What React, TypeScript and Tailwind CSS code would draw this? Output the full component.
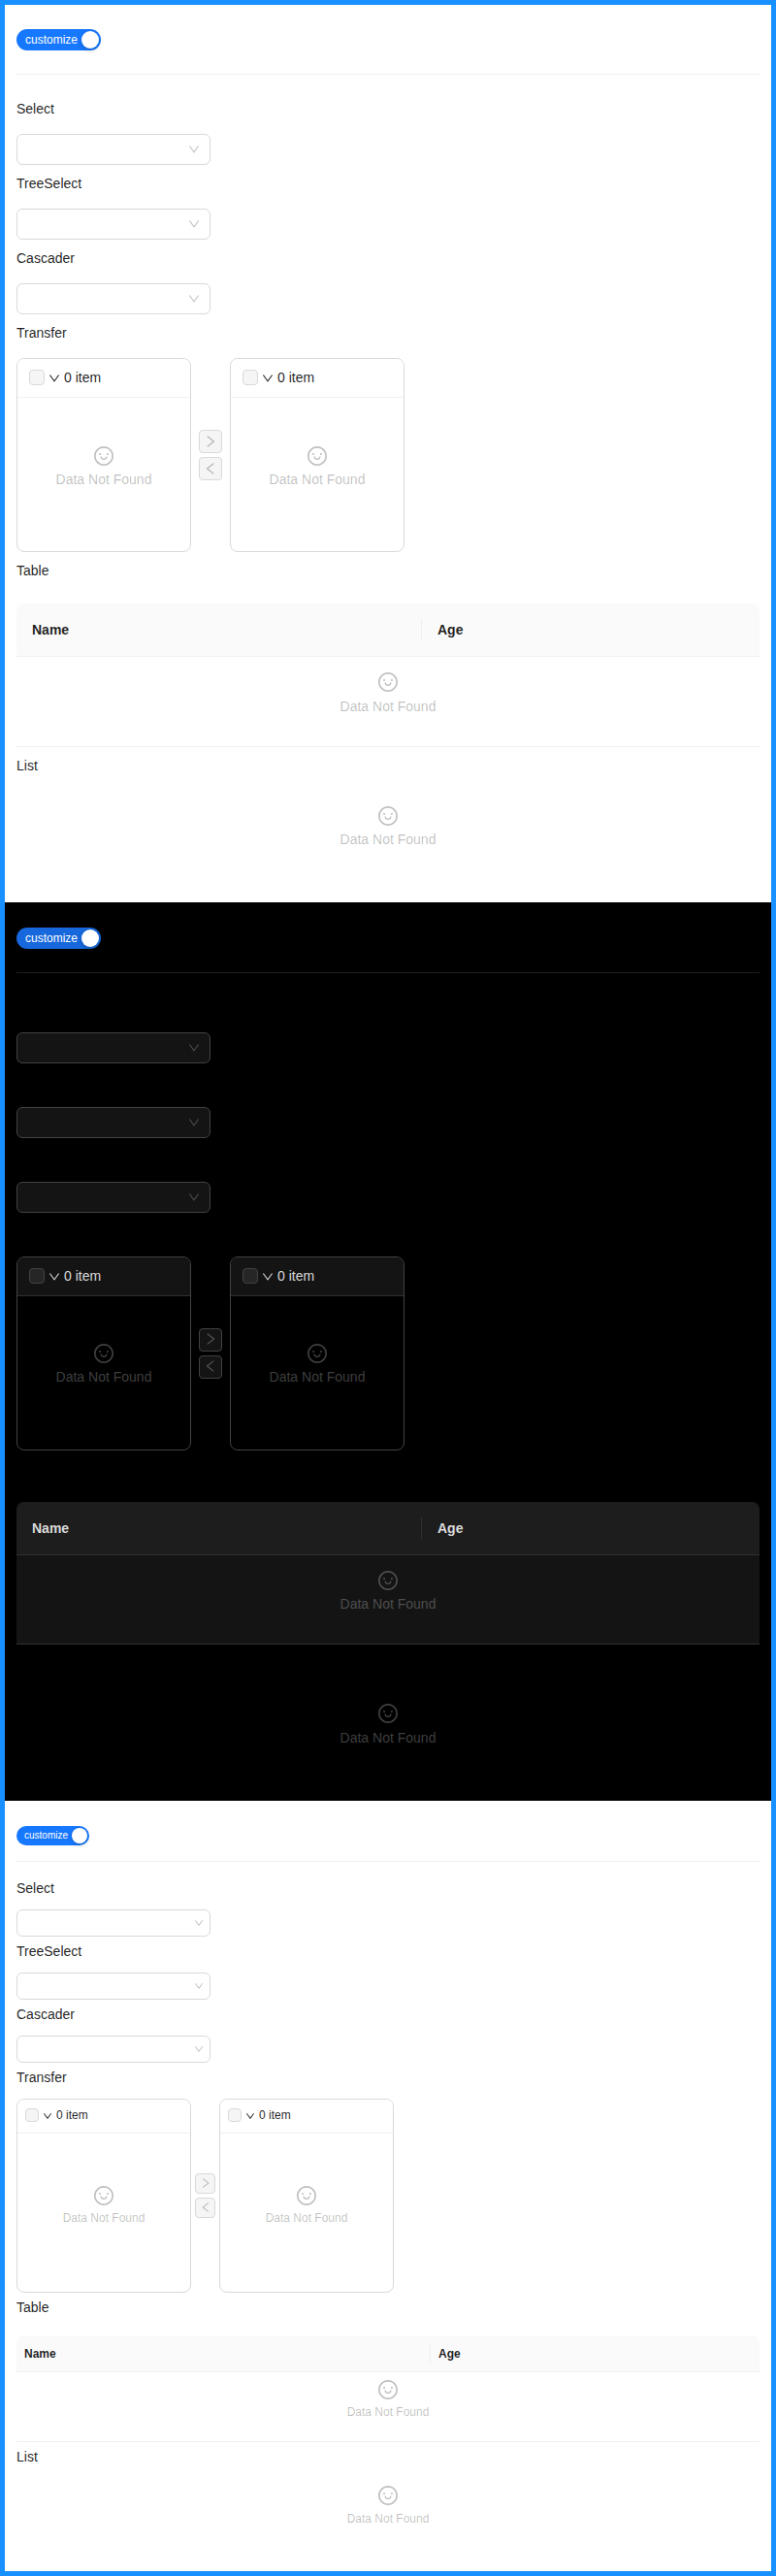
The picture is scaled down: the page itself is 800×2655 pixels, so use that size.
import React from 'react';

type Theme = {
  id: string;
  section: string;
  toggle: string;
  toggleText: string;
  handle: string;
  divider: string;
  label: string;
  group: string;
  select: string;
  arrow: string;
  transfer: string;
  panel: string;
  panelHead: string;
  checkbox: string;
  caret: string;
  headText: string;
  panelBody: string;
  operations: string;
  opButton: string;
  opIcon: string;
  emptyText: string;
  panelGap: string;
  table: string;
  thead: string;
  nameCell: string;
  separator: string;
  ageCell: string;
  row: string;
  rowGap: string;
  list: string;
  listGap: string;
};

const light: Theme = {
  id: 'light',
  section: 'h-[925px] bg-white pt-[25px]',
  toggle: 'h-[22px] w-[87px] bg-[#1677ff] pl-[9px] pr-[2px]',
  toggleText: 'text-[12px] leading-[22px]',
  handle: 'size-[18px]',
  divider: 'mt-6 mb-6 bg-[rgba(5,5,5,0.06)]',
  label: 'mb-[15px] text-[rgba(0,0,0,0.88)]',
  group: 'mb-2',
  select: 'h-8 border-[#d9d9d9] bg-white pr-[10px]',
  arrow: 'size-3 text-[rgba(0,0,0,0.25)]',
  transfer: 'mb-2',
  panel: 'border-[#d9d9d9]',
  panelHead: 'h-10 border-[#f0f0f0] bg-white pl-3 pb-px',
  checkbox: 'size-4 border-[#d9d9d9] bg-[#f5f5f5]',
  caret: 'mt-[2px] size-3 text-[rgba(0,0,0,0.88)]',
  headText: 'text-[14px] leading-[22px] text-[rgba(0,0,0,0.88)]',
  panelBody: 'pt-[50px]',
  operations: 'mx-2',
  opButton: 'size-6 border-[#d9d9d9] bg-[#f5f5f5] pl-1 pt-1',
  opIcon: 'size-[14px] text-[rgba(0,0,0,0.25)]',
  emptyText: 'text-[14px] leading-[22px] text-[rgba(0,0,0,0.25)]',
  panelGap: 'mt-[3px]',
  table: 'mt-[23px] mb-2 bg-white',
  thead: 'h-[55px] border-[#f0f0f0] bg-[#fafafa] text-[14px] leading-[22px] text-[rgba(0,0,0,0.88)]',
  nameCell: 'w-[417px] pl-4',
  separator: 'h-[22px] bg-[#f0f0f0]',
  ageCell: 'pl-4',
  row: 'h-[93px] border-[#f0f0f0] pt-4',
  rowGap: 'mt-1',
  list: 'pt-4',
  listGap: 'mt-[3px]',
};

const dark: Theme = {
  ...light,
  id: 'dark',
  section: 'h-[926px] bg-black pt-[26px]',
  toggle: 'h-[22px] w-[87px] bg-[#1668dc] pl-[9px] pr-[2px]',
  divider: 'mt-6 mb-6 bg-[rgba(253,253,253,0.12)]',
  label: 'mb-[15px] text-black',
  select: 'h-8 border-[#424242] bg-[#141414] pr-[10px]',
  arrow: 'size-3 text-[rgba(255,255,255,0.25)]',
  panel: 'border-[#424242]',
  panelHead: 'h-10 border-[#303030] bg-[#141414] pl-3 pb-px',
  checkbox: 'size-4 border-[#424242] bg-[#262626]',
  caret: 'mt-[2px] size-3 text-[rgba(255,255,255,0.85)]',
  headText: 'text-[14px] leading-[22px] text-[rgba(255,255,255,0.85)]',
  panelBody: 'pt-[49px]',
  opButton: 'size-6 border-[#424242] bg-[#141414] pl-1 pt-[3px]',
  opIcon: 'size-[14px] text-[rgba(255,255,255,0.25)]',
  emptyText: 'text-[14px] leading-[22px] text-[rgba(255,255,255,0.25)]',
  table: 'mt-[23px] mb-2 bg-[#141414]',
  thead: 'h-[55px] border-[#303030] bg-[#1d1d1d] text-[14px] leading-[22px] text-[rgba(255,255,255,0.85)]',
  separator: 'h-[22px] bg-[#303030]',
  row: 'h-[92px] border-[#303030] pt-4',
  rowGap: 'mt-[3px]',
  list: 'pt-4',
  listGap: 'mt-1',
};

const compact: Theme = {
  ...light,
  id: 'compact',
  section: 'h-[794px] bg-white pt-[26px]',
  toggle: 'h-5 w-[75px] bg-[#1677ff] pl-2 pr-[2px]',
  toggleText: 'pb-px text-[10px] leading-[19px]',
  handle: 'size-4',
  divider: 'mt-4 mb-4 bg-[rgba(5,5,5,0.06)]',
  label: 'mb-[11px] text-[rgba(0,0,0,0.88)]',
  group: 'mb-1',
  select: 'h-7 border-[#d9d9d9] bg-white pr-[6px]',
  arrow: 'size-[10px] text-[rgba(0,0,0,0.25)]',
  transfer: 'mb-1',
  panelHead: 'h-[35px] border-[#f0f0f0] bg-white pl-2 pb-[2px]',
  checkbox: 'size-[14px] border-[#d9d9d9] bg-[#f5f5f5]',
  caret: 'mt-[2px] size-[10px] text-[rgba(0,0,0,0.88)]',
  headText: 'text-[12px] leading-[20px] text-[rgba(0,0,0,0.88)]',
  panelBody: 'pt-[54px]',
  operations: 'mx-1',
  opButton: 'size-[21px] border-[#d9d9d9] bg-[#f5f5f5] pl-1 pt-[3px]',
  opIcon: 'size-3 text-[rgba(0,0,0,0.25)]',
  emptyText: 'text-[12px] leading-[20px] text-[rgba(0,0,0,0.25)]',
  table: 'mt-[19px] mb-1 bg-white',
  thead: 'h-[37px] border-[#f0f0f0] bg-[#fafafa] text-[12px] leading-[20px] text-[rgba(0,0,0,0.88)]',
  nameCell: 'w-[426px] pl-2',
  separator: 'h-[19px] bg-[#f0f0f0]',
  ageCell: 'pl-2',
  row: 'h-[72px] border-[#f0f0f0] pt-2',
  rowGap: 'mt-[3px]',
  list: 'pt-2',
  listGap: 'mt-1',
};

const paths = {
  down: 'M884 256h-75c-5.1 0-9.9 2.5-12.9 6.6L512 654.2 227.9 262.6c-3-4.1-7.8-6.6-12.9-6.6h-75c-6.5 0-10.3 7.4-6.5 12.7l352.6 486.1c12.8 17.6 39 17.6 51.7 0l352.6-486.1c3.9-5.3.1-12.7-6.4-12.7z',
  right:
    'M765.7 486.8L314.9 134.7A7.97 7.97 0 00302 141v77.3c0 4.9 2.3 9.6 6.1 12.6l360 281.1-360 281.1c-3.9 3-6.1 7.7-6.1 12.6V883c0 6.7 7.7 10.4 12.9 6.3l450.8-352.1a31.96 31.96 0 000-50.4z',
  left: 'M724 218.3V141c0-6.7-7.7-10.4-12.9-6.3L260.3 486.8a31.86 31.86 0 000 50.3l450.8 352.1c5.3 4.1 12.9.4 12.9-6.3v-77.3c0-4.9-2.3-9.6-6.1-12.6l-360-281.1 360-281.1c3.8-3 6.1-7.7 6.1-12.6z',
  smile:
    'M288 421a48 48 0 1096 0 48 48 0 10-96 0zm352 0a48 48 0 1096 0 48 48 0 10-96 0zM512 64C264.6 64 64 264.6 64 512s200.6 448 448 448 448-200.6 448-448S759.4 64 512 64zm263 711c-34.2 34.2-74 61-118.3 79.8C611 874.2 562.3 884 512 884c-50.3 0-99-9.8-144.8-29.2A370.4 370.4 0 01248.9 775c-34.2-34.2-61-74-79.8-118.3C149.8 611 140 562.3 140 512s9.8-99 29.2-144.8A370.4 370.4 0 01249 248.9c34.2-34.2 74-61 118.3-79.8C413 149.8 461.7 140 512 140c50.3 0 99 9.8 144.8 29.2A370.4 370.4 0 01775.1 249c34.2 34.2 61 74 79.8 118.3C874.2 413 884 461.7 884 512s-9.8 99-29.2 144.8A368.89 368.89 0 01775 775zM664 533h-48.1c-4.2 0-7.8 3.2-8.1 7.4C604 589.9 562.5 629 512 629s-92.1-39.1-95.8-88.6c-.3-4.2-3.9-7.4-8.1-7.4H360a8 8 0 00-8 8.4c4.4 84.3 74.5 151.6 160 151.6s155.6-67.3 160-151.6a8 8 0 00-8-8.4z',
};

function Icon({ name, className }: { name: keyof typeof paths; className: string }) {
  return (
    <svg viewBox="64 64 896 896" fill="currentColor" className={`block shrink-0 ${className}`} aria-hidden="true">
      <path d={paths[name]} />
    </svg>
  );
}

function Label({ t, children }: { t: Theme; children: React.ReactNode }) {
  return <h4 className={`text-[14px] leading-[22px] font-normal ${t.label}`}>{children}</h4>;
}

function Empty({ t, gap }: { t: Theme; gap: string }) {
  return (
    <div className={`flex flex-col items-center ${t.emptyText}`}>
      <Icon name="smile" className="size-5" />
      <p className={gap}>Data Not Found</p>
    </div>
  );
}

function SelectBox({ t, label }: { t: Theme; label: string }) {
  return (
    <div className={t.group}>
      <Label t={t}>{label}</Label>
      <div className={`flex w-[200px] items-center justify-end rounded-[6px] border ${t.select}`}>
        <Icon name="down" className={t.arrow} />
      </div>
    </div>
  );
}

function Panel({ t }: { t: Theme }) {
  return (
    <div className={`h-[200px] w-[180px] overflow-hidden rounded-[8px] border ${t.panel}`}>
      <div className={`flex items-center gap-1 border-b ${t.panelHead}`}>
        <span className={`rounded-[4px] border ${t.checkbox}`} />
        <Icon name="down" className={t.caret} />
        <span className={t.headText}>0 item</span>
      </div>
      <div className={t.panelBody}>
        <Empty t={t} gap={t.panelGap} />
      </div>
    </div>
  );
}

function Demo({ t }: { t: Theme }) {
  return (
    <section className={`px-3 ${t.section}`}>
      <button type="button" className={`flex items-center justify-between rounded-full text-white ${t.toggle}`}>
        <span className={t.toggleText}>customize</span>
        <span className={`rounded-full bg-white shadow-[0_2px_4px_0_rgba(0,35,11,0.2)] ${t.handle}`} />
      </button>
      <div className={`h-px ${t.divider}`} />

      <SelectBox t={t} label="Select" />
      <SelectBox t={t} label="TreeSelect" />
      <SelectBox t={t} label="Cascader" />

      <Label t={t}>Transfer</Label>
      <div className={`flex items-center ${t.transfer}`}>
        <Panel t={t} />
        <div className={`flex flex-col gap-1 ${t.operations}`}>
          <button type="button" className={`flex items-start rounded-[4px] border ${t.opButton}`}>
            <Icon name="right" className={t.opIcon} />
          </button>
          <button type="button" className={`flex items-start rounded-[4px] border ${t.opButton}`}>
            <Icon name="left" className={t.opIcon} />
          </button>
        </div>
        <Panel t={t} />
      </div>

      <Label t={t}>Table</Label>
      <div className={`rounded-t-[8px] ${t.table}`}>
        <div className={`flex items-center rounded-t-[8px] border-b font-bold ${t.thead}`}>
          <div className={t.nameCell}>Name</div>
          <div className={`w-px ${t.separator}`} />
          <div className={t.ageCell}>Age</div>
        </div>
        <div className={`border-b ${t.row}`}>
          <Empty t={t} gap={t.rowGap} />
        </div>
      </div>

      <Label t={t}>List</Label>
      <div className={t.list}>
        <Empty t={t} gap={t.listGap} />
      </div>
    </section>
  );
}

export default function App() {
  return (
    <main className="w-[800px] border-[5px] border-[#1890ff] font-['Liberation_Sans',Arial,sans-serif]">
      <Demo t={light} />
      <Demo t={dark} />
      <Demo t={compact} />
    </main>
  );
}
